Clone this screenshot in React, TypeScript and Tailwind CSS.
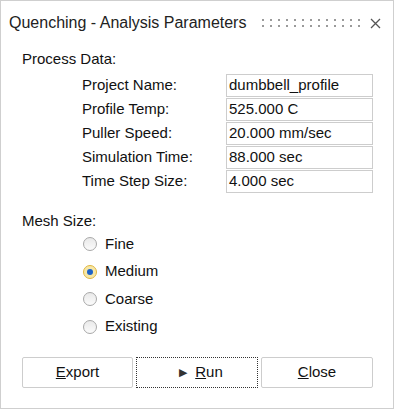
const fields = [
  { label: "Project Name:", value: "dumbbell_profile" },
  { label: "Profile Temp:", value: "525.000 C" },
  { label: "Puller Speed:", value: "20.000 mm/sec" },
  { label: "Simulation Time:", value: "88.000 sec" },
  { label: "Time Step Size:", value: "4.000 sec" },
];

const meshOptions = ["Fine", "Medium", "Coarse", "Existing"];

function Radio({ checked }: { checked: boolean }) {
  if (checked) {
    return (
      <span className="flex h-[14px] w-[14px] items-center justify-center rounded-full border border-[#e0b640] bg-[#f7e7a6]">
        <span className="h-[6px] w-[6px] rounded-full bg-[#1e63c8]" />
      </span>
    );
  }
  return (
    <span className="h-[14px] w-[14px] rounded-full border border-[#a8a8a8] bg-gradient-to-b from-[#e9e9e9] to-[#fbfbfb]" />
  );
}

export default function App() {
  return (
    <div
      className="flex h-[409px] w-[394px] flex-col border border-[#cfcfcf] bg-white text-[15px] text-[#111]"
      style={{ fontFamily: '"Liberation Sans", Arial, sans-serif' }}
    >
      {/* Title bar */}
      <div className="flex h-[44px] items-center pl-[8px] pr-[8px]">
        <span className="text-[16px] text-[#222]">Quenching - Analysis Parameters</span>
        <div className="ml-auto mr-[10px] grid grid-cols-[repeat(13,2px)] gap-x-[6px] gap-y-[4px]">
          {Array.from({ length: 26 }).map((_, i) => (
            <span key={i} className="h-[2px] w-[2px] bg-[#9a9a9a]" />
          ))}
        </div>
        <svg width="11" height="11" viewBox="0 0 11 11" className="mr-[4px]">
          <path d="M1 1L10 10M10 1L1 10" stroke="#555" strokeWidth="1.3" />
        </svg>
      </div>

      {/* Process Data */}
      <div className="mt-[5px] pl-[21px] leading-[18px]">Process Data:</div>
      <div className="mt-[6px] flex flex-col gap-[1px] pl-[81px] pr-[20px]">
        {fields.map((f) => (
          <div key={f.label} className="flex h-[23px] items-center">
            <span className="w-[144px]">{f.label}</span>
            <div className="flex h-[23px] flex-1 items-center border border-[#cdcdcd] px-[2px]">{f.value}</div>
          </div>
        ))}
      </div>

      {/* Mesh Size */}
      <div className="mt-[19px] pl-[21px] leading-[18px]">Mesh Size:</div>
      <div className="mt-[5px] flex flex-col gap-[9.5px] pl-[82px]">
        {meshOptions.map((m) => (
          <div key={m} className="flex h-[18px] items-center gap-[8px]">
            <Radio checked={m === "Medium"} />
            <span>{m}</span>
          </div>
        ))}
      </div>

      {/* Buttons */}
      <div className="mt-[21px] flex gap-[3px] pl-[21px] pr-[20px]">
        <button className="flex h-[31px] w-[111px] items-center justify-center rounded-[2px] border border-[#cdcdcd] bg-white">
          <span><span className="underline">E</span>xport</span>
        </button>
        <button className="flex h-[31px] w-[122px] items-center justify-center border border-dotted border-[#333] bg-white pl-[8px]">
          <span className="mr-[8px] text-[11px] text-[#333]">▶</span>
          <span><span className="underline">R</span>un</span>
        </button>
        <button className="flex h-[31px] flex-1 items-center justify-center rounded-[2px] border border-[#cdcdcd] bg-white">
          <span><span className="underline">C</span>lose</span>
        </button>
      </div>
    </div>
  );
}
